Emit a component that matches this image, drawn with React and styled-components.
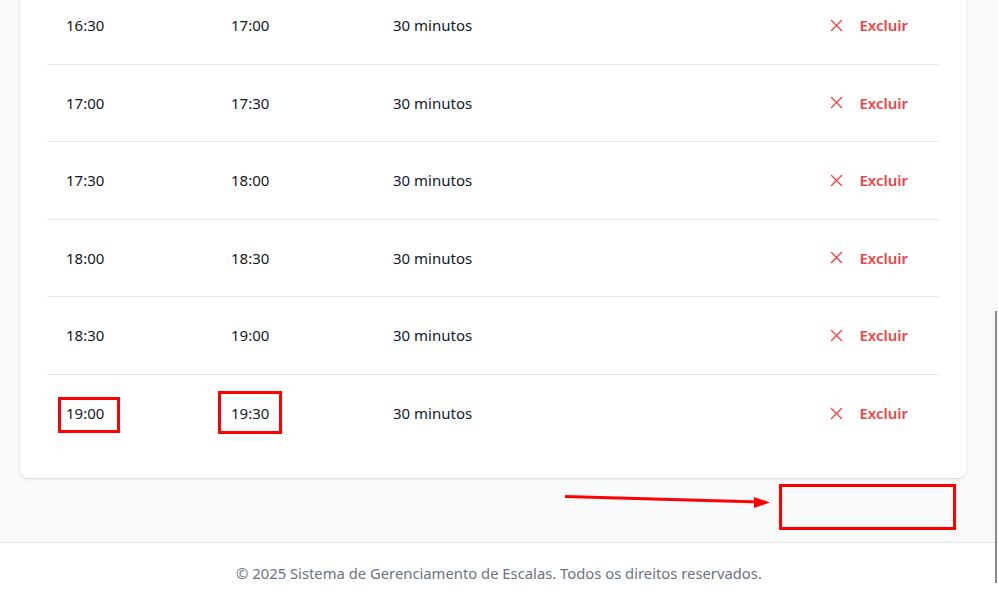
import styled, { createGlobalStyle } from "styled-components";

const GlobalStyle = createGlobalStyle`
    html, body {
        margin: 0;
        padding: 0;
        background-color: #f9fafb;
        font-family: "Noto Sans", "Open Sans", sans-serif;
        color: #111827;
    }
`;

const StyledPage = styled.div`
    position: relative;
    height: 100vh;
    overflow: hidden;
    display: flex;
    flex-direction: column;
    justify-content: flex-end;
`;

const StyledMain = styled.main`
    padding: 0 32px 64px 20px;
`;

const StyledCard = styled.section`
    background-color: #ffffff;
    border-radius: 8px;
    box-shadow: 0 1px 3px rgba(0, 0, 0, 0.1), 0 1px 2px rgba(0, 0, 0, 0.06);
    padding: 0 27px 26px 27px;
`;

const StyledRow = styled.div`
    display: grid;
    grid-template-columns: 165px 162px 1fr auto;
    align-items: center;
    height: 77.5px;
    box-sizing: border-box;
    padding: 0 31px 0 19px;
    font-size: 15px;
    border-bottom: ${(props) => (props.$last ? "none" : "1px solid #e5e7eb")};
`;

const StyledCell = styled.span`
    line-height: 22px;
`;

const StyledDelete = styled.button`
    display: flex;
    align-items: center;
    gap: 16px;
    border: none;
    background: none;
    padding: 0;
    font-family: inherit;
    font-size: 15px;
    font-weight: 600;
    color: #ef4444;
    cursor: pointer;
`;

const StyledFooter = styled.footer`
    background-color: #ffffff;
    border-top: 1px solid #e5e7eb;
    padding: 19px 0 11px 0;
    text-align: center;
    font-size: 14.8px;
    line-height: 22px;
    color: #6b7280;
`;

// marcas vermelhas por cima do print
const StyledMark = styled.div`
    position: absolute;
    left: ${(props) => props.$x}px;
    top: ${(props) => props.$y}px;
    width: ${(props) => props.$w}px;
    height: ${(props) => props.$h}px;
    border: 3px solid #ff0000;
    box-sizing: border-box;
    pointer-events: none;
`;

const StyledArrow = styled.svg`
    position: absolute;
    left: 560px;
    top: 488px;
    pointer-events: none;
`;

const StyledScrollbar = styled.div`
    position: absolute;
    right: 1px;
    top: 311px;
    width: 2px;
    height: 272px;
    background-color: #8a8a8a;
`;

const schedules = [
    ["16:30", "17:00"],
    ["17:00", "17:30"],
    ["17:30", "18:00"],
    ["18:00", "18:30"],
    ["18:30", "19:00"],
    ["19:00", "19:30"],
];

function CloseIcon() {
    return (
        <svg width="13" height="13" viewBox="0 0 13 13" fill="none">
            <path d="M1.5 1.5L11.5 11.5M11.5 1.5L1.5 11.5" stroke="#ef4444" strokeWidth="1.4" strokeLinecap="round" />
        </svg>
    );
}

function App() {
    return (
        <StyledPage>
            <GlobalStyle />
            <StyledMain>
                <StyledCard>
                    {schedules.map(([start, end], index) => (
                        <StyledRow key={start} $last={index === schedules.length - 1}>
                            <StyledCell>{start}</StyledCell>
                            <StyledCell>{end}</StyledCell>
                            <StyledCell>30 minutos</StyledCell>
                            <StyledDelete>
                                <CloseIcon />
                                Excluir
                            </StyledDelete>
                        </StyledRow>
                    ))}
                </StyledCard>
            </StyledMain>
            <StyledFooter>© 2025 Sistema de Gerenciamento de Escalas. Todos os direitos reservados.</StyledFooter>

            <StyledMark $x={58} $y={397} $w={62} $h={36} />
            <StyledMark $x={218} $y={391} $w={64} $h={43} />
            <StyledMark $x={779} $y={484} $w={177} $h={46} />
            <StyledArrow width="215" height="24" viewBox="0 0 215 24">
                <line x1="5" y1="8.5" x2="200" y2="14" stroke="#ff0000" strokeWidth="3" />
                <polygon points="210,14.5 194,9 194,20" fill="#ff0000" />
            </StyledArrow>
            <StyledScrollbar />
        </StyledPage>
    );
}

export default App;
